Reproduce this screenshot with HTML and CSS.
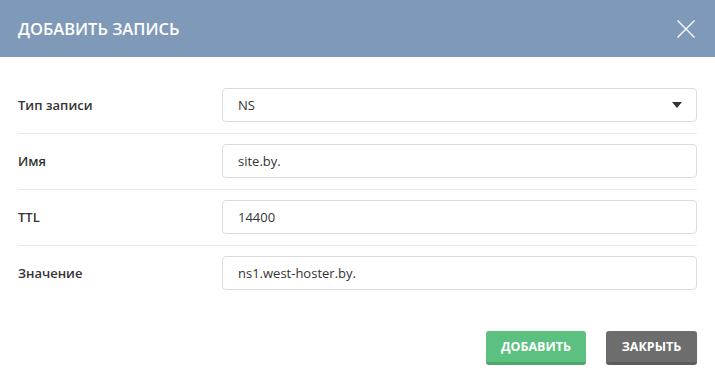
FILE: index.html
```html
<!DOCTYPE html>
<html lang="ru">
<head>
<meta charset="utf-8">
<link rel="stylesheet" href="styles.css">
</head>
<body>
<div class="modal">
  <div class="modal-header">
    <h1 class="modal-title">ДОБАВИТЬ ЗАПИСЬ</h1>
    <button class="close" type="button" aria-label="Закрыть">
      <svg width="18" height="18" viewBox="0 0 18 18"><path d="M0.5 0.5 L17.5 17.5 M17.5 0.5 L0.5 17.5" stroke="#fff" stroke-width="1.3" fill="none"/></svg>
    </button>
  </div>
  <div class="modal-body">
    <div class="row">
      <div class="label">Тип записи</div>
      <div class="field select">
        <span>NS</span>
        <span class="caret"></span>
      </div>
    </div>
    <div class="row">
      <div class="label">Имя</div>
      <div class="field">site.by.</div>
    </div>
    <div class="row">
      <div class="label">TTL</div>
      <div class="field">14400</div>
    </div>
    <div class="row last">
      <div class="label">Значение</div>
      <div class="field">ns1.west-hoster.by.</div>
    </div>
  </div>
  <div class="modal-footer">
    <button class="btn btn-green" type="button">ДОБАВИТЬ</button>
    <button class="btn btn-grey" type="button">ЗАКРЫТЬ</button>
  </div>
</div>
</body>
</html>
```

FILE: styles.css
```css
html, body {
  margin: 0;
  padding: 0;
  background: #fff;
}
body {
  font-family: "Open Sans", "Noto Sans", sans-serif;
  color: #333;
}
.modal {
  width: 715px;
  height: 373px;
  background: #fff;
  overflow: hidden;
}
.modal-header {
  height: 57px;
  background: #7f99b8;
  display: flex;
  align-items: center;
  justify-content: space-between;
  padding: 0 20px 0 18px;
  box-sizing: border-box;
}
.modal-title {
  margin: 0;
  font-size: 16.5px;
  font-weight: 600;
  color: #fff;
  letter-spacing: 0;
}
.close {
  background: none;
  border: 0;
  padding: 0;
  width: 18px;
  height: 18px;
  display: block;
  cursor: pointer;
}
.close svg { display: block; }
.modal-body {
  padding: 21px 18px 0 18px;
}
.row {
  display: flex;
  align-items: center;
  padding: 10px 0 11px 0;
  border-bottom: 1px solid #e9e9e9;
}
.row.last {
  border-bottom: 0;
}
.label {
  width: 204px;
  flex: none;
  font-size: 13px;
  font-weight: 600;
  color: #333;
}
.field {
  flex: 1;
  height: 34px;
  box-sizing: border-box;
  border: 1px solid #dcdcdc;
  border-radius: 4px;
  padding: 0 15px;
  display: flex;
  align-items: center;
  font-size: 13px;
  color: #333;
}
.select {
  justify-content: space-between;
}
.caret {
  width: 0;
  height: 0;
  border-left: 5px solid transparent;
  border-right: 5px solid transparent;
  border-top: 6px solid #333;
  margin-right: -1px;
}
.modal-footer {
  display: flex;
  justify-content: flex-end;
  gap: 20px;
  padding: 30px 18px 0 18px;
}
.btn {
  height: 34px;
  border: 0;
  border-radius: 3px;
  color: #fff;
  font-family: "Open Sans", "Noto Sans", sans-serif;
  font-size: 12.5px;
  font-weight: 700;
  padding: 0;
  cursor: pointer;
}
.btn-green {
  width: 100px;
  background: #5cc180;
  border-bottom: 3px solid #4aa86b;
}
.btn-grey {
  width: 91px;
  background: #6d6d6d;
  border-bottom: 3px solid #5c5c5c;
}
```
